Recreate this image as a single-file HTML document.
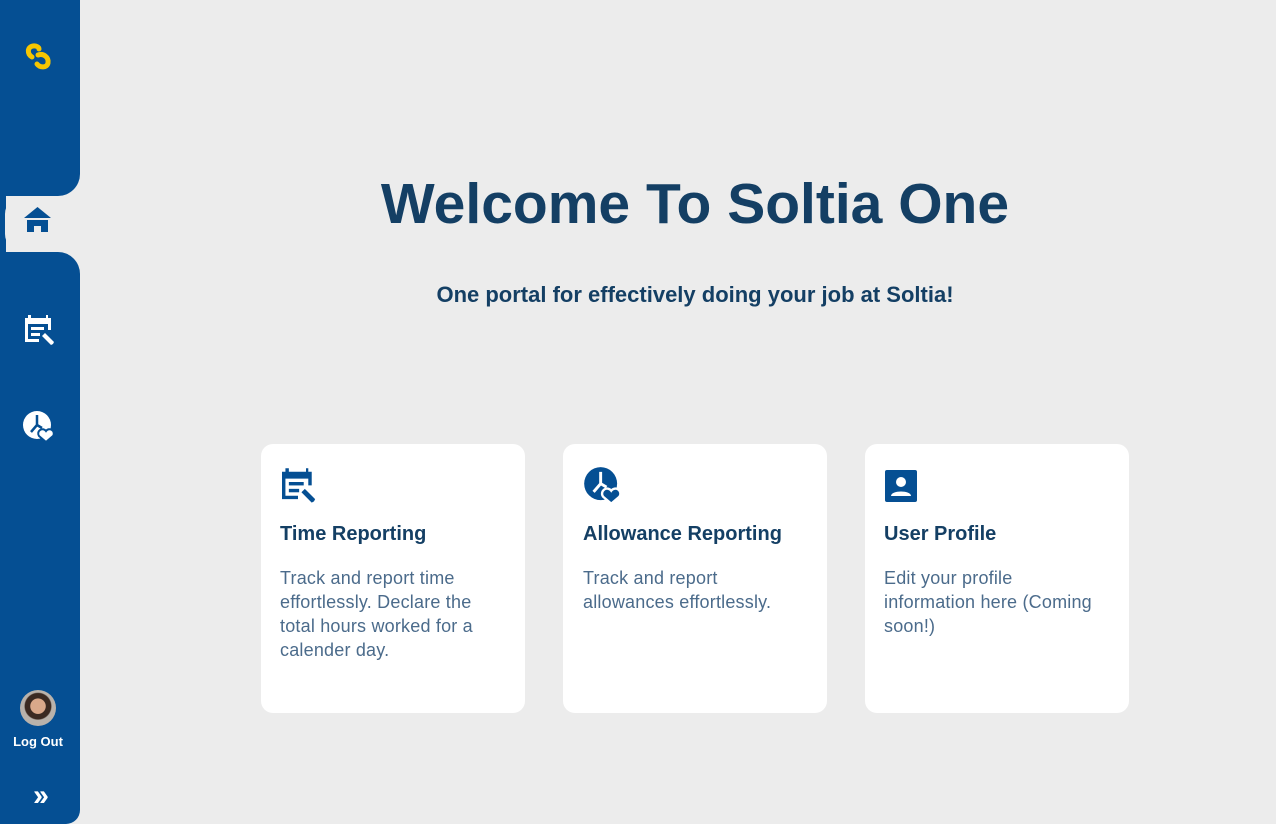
<!DOCTYPE html>
<html><head><style>
*{margin:0;padding:0;box-sizing:border-box}
body{width:1276px;height:824px;background:#ececec;position:relative;overflow:hidden;font-family:"Liberation Sans",Arial,sans-serif}
.b{position:absolute;background:#054f93}
.card{position:absolute;top:444px;width:264px;height:269px;background:#fff;border-radius:12px}
.card svg{position:absolute;left:18px;top:22px}
.card h3{position:absolute;left:19px;top:79px;font-size:20px;color:#143f64;font-weight:bold}
.card p{position:absolute;left:19px;top:122px;width:214px;font-size:18px;line-height:24px;color:#4b6b8b;letter-spacing:0.2px}
</style></head><body>
<div class="b" style="left:0;top:0;width:80px;height:196px;border-bottom-right-radius:22px"></div>
<div class="b" style="left:0;top:180px;width:6px;height:90px"></div>
<div style="position:absolute;left:5px;top:196px;width:90px;height:56px;background:#ececec;border-radius:18px 0 0 18px"></div>
<div class="b" style="left:0;top:252px;width:80px;height:572px;border-top-right-radius:22px;border-bottom-right-radius:14px"></div>
<!-- logo -->
<svg style="position:absolute;left:24px;top:43px" width="30" height="28" viewBox="0 0 30 28"><path d="M8 14 C3 11 3 4 9 3 C12 2.5 15 4 15 6" stroke="#f7c600" stroke-width="5" fill="none" stroke-linecap="round"/><path d="M14 12 C19 10 25 14 24 20 C23 25 16 25 13 21" stroke="#f7c600" stroke-width="5" fill="none" stroke-linecap="round"/></svg>
<!-- home -->
<svg style="position:absolute;left:23px;top:206px" width="29" height="28" viewBox="0 0 29 28"><path d="M14.5 1 L28 12 H1Z M4 14 H25 V26 H18 V20 H11 V26 H4Z" fill="#054f93"/></svg>
<!-- calendar -->
<svg style="position:absolute;left:23px;top:313px" width="32" height="35" viewBox="0 0 32 35"><path d="M5 2v3H2v24h14v-3H5V11h20v6h3V5h-3V2h-2v3H8V2z" fill="#fff"/><rect x="8" y="14" width="13" height="3" fill="#fff"/><rect x="8" y="20" width="9" height="3" fill="#fff"/><path d="M19 23l3-3 9 9-1 2-2 1z" fill="#fff"/></svg>
<!-- clock heart -->
<svg style="position:absolute;left:22px;top:410px" width="34" height="34" viewBox="0 0 34 34"><circle cx="15" cy="15" r="14" fill="#fff"/><path d="M15 5v10l-6 7M15 15l5 3" stroke="#054f93" stroke-width="2.5" fill="none"/><path d="M24 32l-7-6a4 4 0 0 1 7-5a4 4 0 0 1 7 5z" fill="#fff" stroke="#054f93" stroke-width="2"/></svg>
<div style="position:absolute;left:20px;top:690px;width:36px;height:36px;border-radius:50%;background:radial-gradient(circle at 50% 45%,#d9a88a 0 28%,#3b2a22 30% 48%,#b9b2ab 52%)"></div>
<div style="position:absolute;left:0;top:734px;width:76px;text-align:center;color:#fff;font-size:13px;font-weight:bold">Log Out</div>
<div style="position:absolute;left:0;top:781px;width:78px;text-align:center;color:#fff;font-size:30px;line-height:30px;font-weight:bold;letter-spacing:-4px">››</div>
<div style="position:absolute;left:80px;width:1230px;top:171px;text-align:center;font-size:57px;font-weight:bold;color:#143f64">Welcome To Soltia One</div>
<div style="position:absolute;left:80px;width:1230px;top:282px;text-align:center;font-size:22px;font-weight:bold;color:#143f64">One portal for effectively doing your job at Soltia!</div>
<div class="card" style="left:261px"><svg width="38" height="40" viewBox="0 0 32 35"><path d="M5 2v3H2v24h14v-3H5V11h20v6h3V5h-3V2h-2v3H8V2z" fill="#054f93"/><rect x="8" y="14" width="13" height="3" fill="#054f93"/><rect x="8" y="20" width="9" height="3" fill="#054f93"/><path d="M19 23l3-3 9 9-1 2-2 1z" fill="#054f93"/></svg><h3>Time Reporting</h3><p>Track and report time effortlessly. Declare the total hours worked for a calender day.</p></div>
<div class="card" style="left:563px"><svg style="left:20px" width="40" height="40" viewBox="0 0 34 34"><circle cx="15" cy="15" r="14" fill="#054f93"/><path d="M15 5v10l-6 7M15 15l5 3" stroke="#fff" stroke-width="2.5" fill="none"/><path d="M24 32l-7-6a4 4 0 0 1 7-5a4 4 0 0 1 7 5z" fill="#054f93" stroke="#fff" stroke-width="2"/></svg><h3 style="left:20px">Allowance Reporting</h3><p style="left:20px">Track and report allowances effortlessly.</p></div>
<div class="card" style="left:865px"><svg style="left:20px;top:26px" width="32" height="32" viewBox="0 0 32 32"><rect width="32" height="32" rx="2" fill="#054f93"/><circle cx="16" cy="12" r="5" fill="#fff"/><path d="M6 26c0-6 20-6 20 0z" fill="#fff"/></svg><h3 style="left:19px">User Profile</h3><p>Edit your profile information here (Coming soon!)</p></div>
</body></html>
